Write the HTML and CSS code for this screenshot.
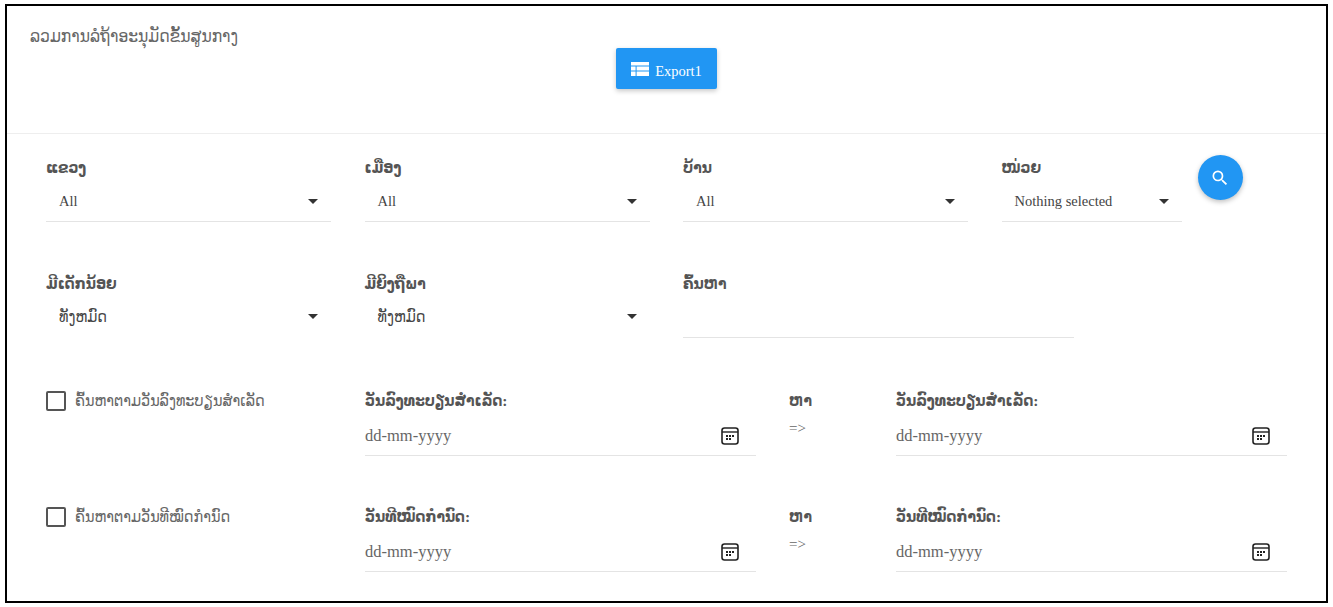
FILE: index.html
```html
<!DOCTYPE html>
<html lang="lo">
<head>
<meta charset="utf-8">
<title>ລວມການລໍຖ້າອະນຸມັດຂັ້ນສູນກາງ</title>
<link rel="stylesheet" href="styles.css">
</head>
<body>
<main class="card">
  <header class="head">
    <h1 class="title">ລວມການລໍຖ້າອະນຸມັດຂັ້ນສູນກາງ</h1>
    <button class="export" type="button">
      <svg class="export-icon" viewBox="0 0 18 14" width="18" height="14"><path fill="#fff" d="M0 0h18v3.6H0zM0 4.6h4.6v4H0zM5.6 4.6H18v4H5.6zM0 9.6h4.6V14H0zM5.6 9.6H18V14H5.6z"/></svg>
      <span class="export-text">Export1</span>
    </button>
  </header>
  <section class="filters">
    <div class="row row-a">
      <div class="field"><div class="label">ແຂວງ</div><div class="select"><span>All</span><i class="caret"></i></div></div>
      <div class="field"><div class="label">ເມືອງ</div><div class="select"><span>All</span><i class="caret"></i></div></div>
      <div class="field"><div class="label">ບ້ານ</div><div class="select"><span>All</span><i class="caret"></i></div></div>
      <div class="field narrow"><div class="label">ໜ່ວຍ</div><div class="select"><span>Nothing selected</span><i class="caret"></i></div></div>
      <button class="search" type="button" aria-label="search">
        <svg viewBox="0 0 24 24" width="20" height="20"><path fill="#fff" d="M15.5 14h-.79l-.28-.27A6.471 6.471 0 0 0 16 9.5 6.5 6.5 0 1 0 9.5 16c1.61 0 3.09-.59 4.23-1.57l.27.28v.79l5 4.99L20.49 19l-4.99-5zm-6 0C7.01 14 5 11.99 5 9.5S7.01 5 9.5 5 14 7.01 14 9.5 11.99 14 9.5 14z"/></svg>
      </button>
    </div>
    <div class="row row-b">
      <div class="field"><div class="label">ມີເດັກນ້ອຍ</div><div class="select plain"><span>ທັງຫມົດ</span><i class="caret"></i></div></div>
      <div class="field"><div class="label">ມີຍິງຖືພາ</div><div class="select plain"><span>ທັງຫມົດ</span><i class="caret"></i></div></div>
      <div class="field wide"><div class="label">ຄົ້ນຫາ</div><div class="blank"></div></div>
    </div>
    <div class="row row-c">
      <label class="check"><i class="box"></i><span>ຄົ້ນຫາຕາມວັນລົງທະບຽນສຳເລັດ</span></label>
      <div class="field wide"><div class="label">ວັນລົງທະບຽນສຳເລັດ:</div><div class="date"><span>dd-mm-yyyy</span>
        <svg class="cal" viewBox="0 0 18 18" width="18" height="18"><rect x="1" y="1" width="16" height="16" rx="2.5" fill="none" stroke="#222" stroke-width="1.6"/><path d="M1 5h16" stroke="#222" stroke-width="1.4"/><path fill="#222" d="M5 8h2v2H5zM8 8h2v2H8zM11 8h2v2h-2zM5 11h2v2H5zM8 11h2v2H8z"/></svg></div></div>
      <div class="to"><div class="label">ຫາ</div><div class="arrow">=&gt;</div></div>
      <div class="field wide"><div class="label">ວັນລົງທະບຽນສຳເລັດ:</div><div class="date"><span>dd-mm-yyyy</span>
        <svg class="cal" viewBox="0 0 18 18" width="18" height="18"><rect x="1" y="1" width="16" height="16" rx="2.5" fill="none" stroke="#222" stroke-width="1.6"/><path d="M1 5h16" stroke="#222" stroke-width="1.4"/><path fill="#222" d="M5 8h2v2H5zM8 8h2v2H8zM11 8h2v2h-2zM5 11h2v2H5zM8 11h2v2H8z"/></svg></div></div>
    </div>
    <div class="row row-c">
      <label class="check"><i class="box"></i><span>ຄົ້ນຫາຕາມວັນທີໝົດກຳນົດ</span></label>
      <div class="field wide"><div class="label">ວັນທີໝົດກຳນົດ:</div><div class="date"><span>dd-mm-yyyy</span>
        <svg class="cal" viewBox="0 0 18 18" width="18" height="18"><rect x="1" y="1" width="16" height="16" rx="2.5" fill="none" stroke="#222" stroke-width="1.6"/><path d="M1 5h16" stroke="#222" stroke-width="1.4"/><path fill="#222" d="M5 8h2v2H5zM8 8h2v2H8zM11 8h2v2h-2zM5 11h2v2H5zM8 11h2v2H8z"/></svg></div></div>
      <div class="to"><div class="label">ຫາ</div><div class="arrow">=&gt;</div></div>
      <div class="field wide"><div class="label">ວັນທີໝົດກຳນົດ:</div><div class="date"><span>dd-mm-yyyy</span>
        <svg class="cal" viewBox="0 0 18 18" width="18" height="18"><rect x="1" y="1" width="16" height="16" rx="2.5" fill="none" stroke="#222" stroke-width="1.6"/><path d="M1 5h16" stroke="#222" stroke-width="1.4"/><path fill="#222" d="M5 8h2v2H5zM8 8h2v2H8zM11 8h2v2h-2zM5 11h2v2H5zM8 11h2v2H8z"/></svg></div></div>
    </div>
  </section>
</main>
</body>
</html>
```
FILE: styles.css
```css
* { box-sizing: border-box; }
html, body { height: 100%; }
body {
  margin: 0;
  padding: 4px 5px;
  background: #fff;
  color: #444;
  font-family: "Liberation Serif", "DejaVu Sans Condensed", "DejaVu Sans", serif;
  overflow: hidden;
}
.card {
  width: 1323px;
  height: 599px;
  border: 2px solid #000;
  background: #fff;
}
.head {
  height: 128px;
  border-bottom: 1px solid #eee;
  position: relative;
  display: flex;
  justify-content: center;
  padding-top: 42px;
}
.title {
  position: absolute;
  left: 23px;
  top: 20px;
  margin: 0;
  font-size: 17.3px;
  line-height: 22px;
  font-weight: 400;
  color: #666;
}
.export {
  width: 101px;
  height: 41px;
  border: 0;
  border-radius: 2px;
  background: #2196f3;
  color: #fff;
  font: 14.5px "Liberation Serif", serif;
  display: flex;
  align-items: center;
  justify-content: center;
  gap: 6px;
  box-shadow: 0 2px 5px rgba(0,0,0,.22);
}
.export-text { margin-top: 6px; }
.filters { padding: 0 39px; }
.row { display: flex; }
.row-a { padding-top: 23px; height: 139px; }
.row-b { height: 117px; }
.row-c { height: 116px; }
.field { width: 285px; margin-right: 33.5px; flex: none; }
.field.narrow { width: 180px; margin-right: 16px; }
.field.wide { width: 391px; margin-right: 0; }
.label {
  font-size: 15.5px;
  line-height: 22px;
  font-weight: 700;
  color: #555;
}
.select {
  height: 42px;
  display: flex;
  align-items: center;
  justify-content: space-between;
  padding: 1px 13px 0;
  border-bottom: 1px solid #e4e4e4;
  margin-top: 1px;
  font-size: 14.5px;
  color: #444;
}
.select.plain { border-bottom: 0; font-size: 16px; height: 41px; padding-top: 0; }
.caret {
  width: 0;
  height: 0;
  border-left: 5px solid transparent;
  border-right: 5px solid transparent;
  border-top: 5px solid #333;
}
.search {
  width: 45px;
  height: 45px;
  margin-top: -2px;
  border: 0;
  border-radius: 50%;
  background: #2196f3;
  display: flex;
  align-items: center;
  justify-content: center;
  padding: 0;
  box-shadow: 0 2px 5px rgba(0,0,0,.25);
}
.blank { height: 42px; border-bottom: 1px solid #e4e4e4; margin-top: 1px; }
.check {
  width: 319px;
  flex: none;
  display: flex;
  align-items: flex-start;
  gap: 9px;
  font-size: 16px;
  line-height: 22px;
  color: #666;
}
.box {
  width: 20px;
  height: 20px;
  flex: none;
  border: 2px solid #555;
  border-radius: 2px;
  margin-top: 1px;
}
.date {
  height: 43px;
  display: flex;
  align-items: center;
  justify-content: space-between;
  padding: 4px 17px 0 0;
  border-bottom: 1px solid #e4e4e4;
  margin-top: 1px;
  font-size: 16.5px;
  color: #666;
}
.cal { margin-top: 0; }
.to { width: 140px; flex: none; padding-left: 33px; }
.arrow { font-size: 15px; line-height: 16px; color: #666; margin-top: 8px; }
```
